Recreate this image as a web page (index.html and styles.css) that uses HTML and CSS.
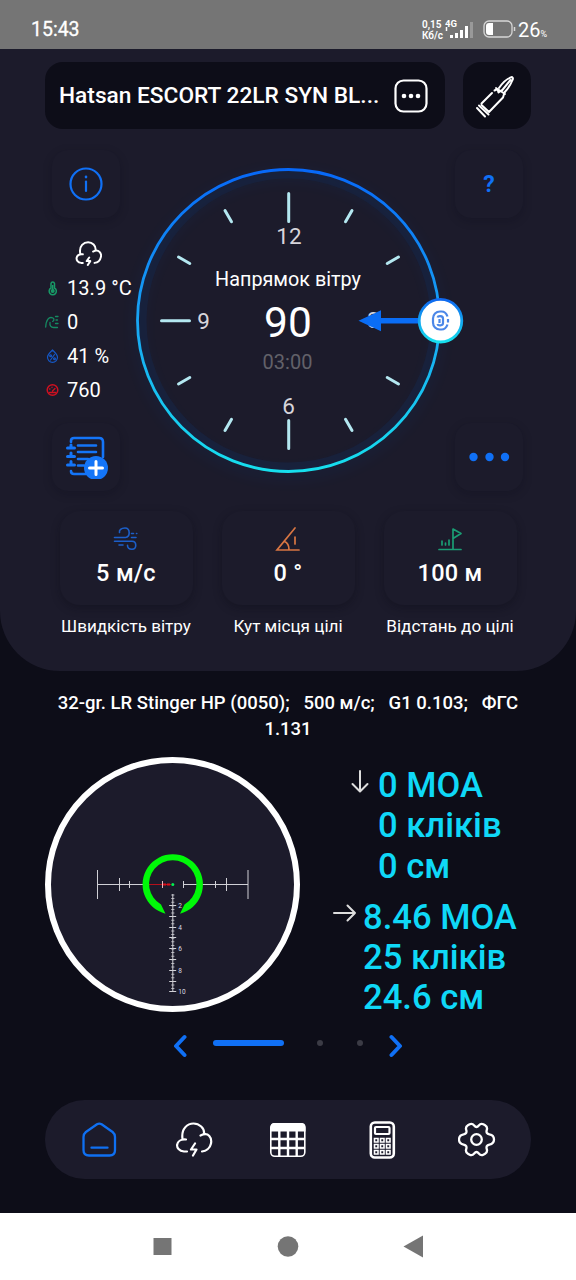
FILE: index.html
```html
<!DOCTYPE html>
<html lang="uk">
<head>
<meta charset="utf-8">
<title>Балістичний калькулятор</title>
<link rel="stylesheet" href="styles.css">
</head>
<body>
<div class="status">
  <span class="clock">15:43</span>
  <div class="status-right">
    <div class="rate"><span>0,15</span><span>Кб/с</span></div>
    <svg class="signal" width="31" height="22" viewBox="0 0 31 22">
      <text class="net" x="0" y="9">4G</text>
      <path d="M6.500 20v-3M11.500 20v-5M16.500 20v-8M21.500 20v-12" stroke="#fff" stroke-width="3"/>
      <path d="M26.500 20v-16" stroke="#999" stroke-width="3"/>
      <path d="M1.500 9v4" stroke="#fff" stroke-width="1.500"/>
    </svg>
    <svg class="battery" width="34" height="18" viewBox="0 0 34 18">
      <rect x="1" y="1" width="28" height="16" rx="5" fill="none" stroke="#d6d6d6" stroke-width="1.300"/>
      <path d="M10 3v12H6a3 3 0 0 1-3-3V6a3 3 0 0 1 3-3z" fill="#fff"/>
      <path d="M31.500 7v4" stroke="#d6d6d6" stroke-width="1.500"/>
    </svg>
    <span class="charge">26<small>%</small></span>
  </div>
</div>

<main class="panel">
  <header class="head">
    <div class="weapon">
      <span class="weapon-name">Hatsan ESCORT 22LR SYN BL...</span>
      <svg width="34" height="34" viewBox="0 0 34 34">
        <rect x="1.500" y="1.500" width="31" height="31" rx="8" fill="none" stroke="#fff" stroke-width="2.200"/>
        <g fill="#fff"><circle cx="10" cy="17" r="2.300"/><circle cx="17" cy="17" r="2.300"/><circle cx="24" cy="17" r="2.300"/></g>
      </svg>
    </div>
    <div class="ammo">
      <svg width="44" height="44" viewBox="0 0 44 44" fill="none" stroke="#fff" stroke-width="2" stroke-linecap="round" stroke-linejoin="round">
        <path d="M2 34l8 8.500M4 31.500l9.500 9"/>
        <path d="M17 19L6.500 29.500M6.500 31l7.500 7L28 23.500l1.500-5M19.500 16.500l3-1.500 1 3.500 3-2M21 14l9 6"/>
        <path d="M24 14C28 8 32 4.500 37 3c1.500 1 1 2 .5 3C35.500 11 33 15 29 19M35.500 6L27 16.500"/>
      </svg>
    </div>
  </header>

  <section class="compass">
    <div class="side">
      <div class="tile">
        <svg width="34" height="34" viewBox="0 0 34 34" fill="none" stroke="#1070f5" stroke-width="2.200" stroke-linecap="round"><circle cx="17" cy="17" r="15.500"/><path d="M17 14.500V24"/><path d="M17 9.800v.3" stroke-width="2.600"/></svg>
      </div>
      <ul class="weather">
        <li class="sky"><svg width="27" height="26" viewBox="0 0 38 36" fill="none" stroke="#fff" stroke-width="2.800" stroke-linecap="round" stroke-linejoin="round"><path d="M11 30.500H8.500C-.5 29.500 0 17 11 18.500M7.500 18C5 6 13 1.500 18.500 1.500S30 6 29 13.500M25.500 14.500C34 10 37.500 18 36.500 22c-1 5-4.500 8-9 8.500M20 23l-3.500 5h5L18 33.500"/></svg></li>
        <li><svg width="14" height="16" viewBox="0 0 14 16" fill="none" stroke="#189a67" stroke-width="1.500"><path d="M6 8V3.500a1.800 1.800 0 0 1 3.500 0V8a3.600 3.600 0 1 1-3.500 0z"/><path d="M7.700 5v6"/><circle cx="7.700" cy="11" r="1.300" fill="#189a67"/></svg><span>13.9 °C</span></li>
        <li><svg width="14" height="14" viewBox="0 0 14 14" fill="none" stroke="#158a62" stroke-width="1.300" stroke-linecap="round"><path d="M.7 12C1 5 4 1 8 3c1.500 1 1 3-.3 3.300M5 7.500c-.5 3 1 5 3.500 5h4M10.500 1.500h2.500M11 5h1.500M10.500 8.500H13"/></svg><span>0</span></li>
        <li><svg width="14" height="14" viewBox="0 0 14 14" fill="none" stroke="#1558c7" stroke-width="1.200" stroke-linecap="round"><path d="M7.500 1C10 3.500 12.500 5.500 12.500 8.300a5 5 0 0 1-10 0C2.500 5.500 5 3.500 7.500 1zM9.500 5.500l-4 5.500"/><circle cx="5.600" cy="6.800" r=".9"/><circle cx="9.500" cy="9.700" r=".9"/></svg><span>41 %</span></li>
        <li><svg width="14" height="14" viewBox="0 0 14 14" fill="none" stroke="#cf1020" stroke-width="1.500" stroke-linecap="round"><circle cx="7.500" cy="7" r="5.300"/><path d="M4.500 9.500h6M7.500 8L10 5.500M4.500 6h.5M7 4.200v.3" stroke-width="1.300"/></svg><span>760</span></li>
      </ul>
      <div class="tile">
        <svg class="note" width="44" height="44" viewBox="0 0 44 44" fill="none" stroke="#1475f8" stroke-width="2.600" stroke-linecap="round" stroke-linejoin="round">
          <path d="M7 7V6q0-3 3-3h25q4 0 4 4v15M7 36q0 3 3 3h12"/>
          <path d="M14 10.500h18M14 17h18M14 24h10M14 30.500h6"/>
          <path d="M3.500 13h7M3.500 21.500h7M3.500 30h7M7 10v3M7 18v3.500M7 26.500V30" stroke-width="3"/>
          <circle cx="32" cy="33" r="12" fill="#1475f8" stroke="none"/><path d="M32 26.500v13M25.500 33h13" stroke="#fff" stroke-width="3"/>
        </svg>
      </div>
    </div>

    <svg class="dial" width="305" height="305" viewBox="136 168 305 305">
      <defs>
        <linearGradient id="ring" x1="0" y1="0" x2="0" y2="1"><stop offset="0" stop-color="#0768f8"/><stop offset=".5" stop-color="#18a5f4"/><stop offset="1" stop-color="#16e0ee"/></linearGradient>
        <linearGradient id="knob" x1="0" y1="0" x2="0" y2="1"><stop offset="0" stop-color="#0f68f0"/><stop offset="1" stop-color="#16e0ee"/></linearGradient>
        <filter id="glow" x="-20%" y="-20%" width="140%" height="140%"><feGaussianBlur stdDeviation="7"/></filter>
        <g id="mark"><path d="M288.500 193.500v13"/></g>
      </defs>
      <circle cx="288.500" cy="325" r="150" fill="none" stroke="#0b4ea8" stroke-width="7" opacity=".14" filter="url(#glow)"/>
      <circle cx="288.500" cy="320.500" r="146" fill="none" stroke="#172341" stroke-width="8" opacity=".7"/>
      <circle cx="288.500" cy="320.500" r="151" fill="none" stroke="url(#ring)" stroke-width="2.800"/>
      <g stroke="#b4e8f1" stroke-width="3" stroke-linecap="round">
        <path d="M288.700 193.500v28M288.700 420.500v28M161.500 320.700h28"/>
        <use href="#mark" transform="rotate(30 288.500 320.500)"/><use href="#mark" transform="rotate(60 288.500 320.500)"/>
        <use href="#mark" transform="rotate(120 288.500 320.500)"/><use href="#mark" transform="rotate(150 288.500 320.500)"/>
        <use href="#mark" transform="rotate(210 288.500 320.500)"/><use href="#mark" transform="rotate(240 288.500 320.500)"/>
        <use href="#mark" transform="rotate(300 288.500 320.500)"/><use href="#mark" transform="rotate(330 288.500 320.500)"/>
      </g>
      <g class="hours"><text x="289" y="243.500">12</text><text x="203.500" y="328.500">9</text><text x="288.500" y="414">6</text><text x="373.500" y="328">3</text></g>
      <text class="dial-title" x="288" y="286">Напрямок вітру</text>
      <text class="dial-value" x="288" y="336.500">90</text>
      <text class="dial-time" x="287.500" y="368.500">03:00</text>
      <path d="M380 320.700h42" stroke="#0a6df5" stroke-width="5.500"/><path d="M358.500 320.700l22.500-10.500v21z" fill="#0a6df5"/>
      <circle cx="440.500" cy="320.700" r="21.300" fill="#fff" stroke="url(#knob)" stroke-width="2.800"/>
      <g fill="none" stroke="#4b87e8" stroke-width="2.200"><path d="M447.500 316.500c-1-3-3-5-6-5h-1.500c-4 0-7 3-7 7v4c0 4 3 7 7 7h1.500c3 0 5-2 6-5"/><path d="M437.500 317.500c.5-2 5.500-2 5.500 1v4.500c0 3-5 3-5.500 1M439.500 319v4M448 319v3.500"/></g>
    </svg>

    <div class="side side-right">
      <div class="tile help">?</div>
      <div class="tile"><svg class="dots" width="42" height="10" viewBox="0 0 42 10" fill="#1070f5"><circle cx="5.500" cy="5" r="4.200"/><circle cx="21.500" cy="5" r="4.200"/><circle cx="37" cy="5" r="4.200"/></svg></div>
    </div>
  </section>

  <section class="params">
    <div class="param">
      <div class="card"><svg width="26" height="26" viewBox="0 0 26 26" fill="none" stroke="#1c5fc9" stroke-width="1.600" stroke-linecap="round"><path d="M1.500 11.500h11c5 0 5-9.500-.5-9.500C8 2 6 4 6.500 6.500M1.500 15.300h17.500c5 0 5 8 0 8-3 0-4.500-1.500-4.500-4M18.500 7.500h2M18.500 11.500h4.500M23.500 7.500h.3M6 19h4"/></svg><b>5 м/с</b></div>
      <span>Швидкість вітру</span>
    </div>
    <div class="param">
      <div class="card"><svg width="26" height="26" viewBox="0 0 26 26" fill="none" stroke="#d87643" stroke-width="1.700" stroke-linecap="round"><path d="M20 2L2 24h22M9.500 15.500c3.500 1.500 4.500 4.500 4.500 8M20 11v7"/></svg><b>0 °</b></div>
      <span>Кут місця цілі</span>
    </div>
    <div class="param">
      <div class="card"><svg width="26" height="26" viewBox="0 0 26 26" fill="none" stroke="#1a9d74" stroke-width="1.700" stroke-linecap="round" stroke-linejoin="round"><path d="M2 23.500h22M16 23V3l8 4.500-8 5M5 15v4M8.500 17v2M12 14v5"/></svg><b>100 м</b></div>
      <span>Відстань до цілі</span>
    </div>
  </section>
</main>

<p class="bullet">32-gr. LR Stinger HP (0050);&nbsp;&nbsp; 500 м/с;&nbsp;&nbsp; G1 0.103;&nbsp;&nbsp; ФГС<br>1.131</p>

<section class="solution">
  <svg class="scope" width="255" height="255" viewBox="45 757 255 255">
    <circle cx="172.500" cy="884.500" r="124.500" fill="#1c1b2b" stroke="#fff" stroke-width="6"/>
    <g fill="none" stroke="#d0d0d6" stroke-width="1">
      <path d="M97.500 884.500h65M183.500 884.500h64.500"/>
      <path d="M97.500 870v29M248 870v29M119.500 878v13M226.500 878v13M129.500 881v7M215.500 881v7M162.500 881v7M183.500 881v7"/>
      <path d="M172.800 894v98"/>
      <path d="M172.800 894.500v97.500" stroke-width="3.200" stroke-dasharray="1 2.600" opacity=".8"/>
      <path d="M169.200 905.500h7M169.200 916.500h7M169.200 927.500h7M169.200 937.500h7M169.200 948.500h7M169.200 959.500h7M169.200 970.500h7M169.200 981.500h7M169.200 991.500h7"/>
    </g>
    <path d="M149 884.500h22" stroke="#b4101c" stroke-width="1"/><path d="M163 884.500h7" stroke="#e00d18" stroke-width="2" stroke-dasharray="3 1"/>
    <path d="M162.500 881v7" stroke="#e8b8bd"/>
    <path d="M165.500 913.700A30.200 30.200 0 1 1 180 913.700L184.500 904.500A23.700 23.700 0 1 0 161 904.500z" fill="#00f808"/>
    <circle cx="172.800" cy="884.500" r="1.500" fill="#00f050"/>
    <g class="scale"><text x="178.300" y="907.800">2</text><text x="178.300" y="929.500">4</text><text x="178.300" y="951">6</text><text x="178.300" y="972.500">8</text><text x="178.300" y="994">10</text></g>
  </svg>
  <div class="results">
    <div class="result drop">
      <svg width="20" height="24" viewBox="0 0 20 24" fill="none" stroke="#ddd" stroke-width="2" stroke-linecap="round" stroke-linejoin="round"><path d="M10 1v20M2.500 14l7.500 7.500 7.500-7.500"/></svg>
      <div>0 MOA<br>0 кліків<br>0 см</div>
    </div>
    <div class="result drift">
      <svg width="24" height="20" viewBox="0 0 24 20" fill="none" stroke="#ddd" stroke-width="2" stroke-linecap="round" stroke-linejoin="round"><path d="M1 10h21M14.500 2.500L22 10l-7.500 7.500"/></svg>
      <div>8.46 MOA<br>25 кліків<br>24.6 см</div>
    </div>
  </div>
</section>

<div class="pager">
  <svg width="14" height="24" viewBox="0 0 14 24" fill="none" stroke="#1070f5" stroke-width="4" stroke-linecap="round" stroke-linejoin="round"><path d="M11.500 3L3 12l8.500 9"/></svg>
  <i class="bar"></i><i class="dot"></i><i class="dot"></i>
  <svg width="14" height="24" viewBox="0 0 14 24" fill="none" stroke="#1070f5" stroke-width="4" stroke-linecap="round" stroke-linejoin="round"><path d="M2.500 3L11 12l-8.500 9"/></svg>
</div>

<nav class="tabs">
  <svg width="38" height="38" viewBox="0 0 38 38" fill="none" stroke="#0f70f2" stroke-width="2.300" stroke-linecap="round" stroke-linejoin="round"><path d="M17 3.300q2.300-1.400 4.600 0l11 7.700q2.400 2 2.400 5v13q0 5.500-5.500 5.500h-20.500q-5.500 0-5.500-5.500V16q0-3 2.400-5zM11.500 26.700h16"/></svg>
  <svg width="38" height="38" viewBox="0 0 38 38" fill="none" stroke="#fff" stroke-width="2.200" stroke-linecap="round" stroke-linejoin="round"><path d="M12 30.500H9C-1 29.500 0 17.500 11 18.500M7.500 18C6 7 13 2.500 18.500 2.500S30 7 29 13.500M25.500 14.500C34 10.500 37 17 36 22.500c-1 5-5 7.700-9 8M20 22.500L16 28.500h5.500L18 34.500"/></svg>
  <svg width="38" height="38" viewBox="0 0 38 38"><rect x="1.800" y="2.800" width="34" height="32.500" rx="4" fill="none" stroke="#fff" stroke-width="1.600"/><path d="M1.500 10.500V6q0-4 4-4h27q4 0 4 4v4.500z" fill="#fff"/><path d="M10.300 9v26M19 9v26M27.700 9v26M2 18h34M2 27h34" stroke="#fff" stroke-width="2.400"/></svg>
  <svg width="38" height="38" viewBox="0 0 38 38" fill="none" stroke="#fff"><rect x="6.800" y="1.500" width="23" height="35" rx="4" stroke-width="2.600"/><rect x="11" y="6" width="14.500" height="7" rx="1" stroke-width="2.200"/><g stroke-width="1.600"><path d="M10.500 17.500H14v3.500h-3.500zM16.500 17.500H20v3.500h-3.500zM22.500 17.500H26v3.500h-3.500zM10.500 23.500H14V27h-3.500zM16.500 23.500H20V27h-3.500zM22.500 23.500H26V27h-3.500zM10.500 29.500H14V33h-3.500zM16.500 29.500H20V33h-3.500zM22.500 29.500H26V33h-3.500z"/></g></svg>
  <svg width="38" height="38" viewBox="0 0 38 38" fill="none" stroke="#fff" stroke-width="2.300" stroke-linejoin="round"><circle cx="18.500" cy="18.500" r="5.300"/><path d="M16.200 4.500c1.600 2 3 2 4.600 0 1.300-1.600 3-2 4.500-1.200l1.800 1c1.800 1 2.300 2.500 1.700 4.500-.8 2.600 0 4 2.600 4.600 3 .6 4.600 1.600 4.600 5.100s-1.600 4.500-4.600 5.100c-2.600.6-3.400 2-2.600 4.600.6 2 .1 3.500-1.700 4.500l-1.800 1c-1.500.8-3.200.4-4.500-1.200-1.600-2-3-2-4.600 0-1.300 1.600-3 2-4.500 1.200l-1.800-1c-1.800-1-2.300-2.500-1.700-4.500.8-2.600 0-4-2.600-4.600C2.600 23 1 22 1 18.500s1.600-4.500 4.600-5.100c2.600-.6 3.400-2 2.600-4.600-.6-2-.1-3.500 1.700-4.500l1.800-1c1.500-.8 3.200-.4 4.500 1.200z"/></svg>
</nav>

<footer class="system">
  <svg width="20" height="26" viewBox="0 0 20 26"><path d="M1.500 4h18v17h-18z" fill="#757575"/></svg>
  <svg width="22" height="26" viewBox="0 0 22 26"><circle cx="11" cy="12.500" r="10.300" fill="#757575"/></svg>
  <svg width="22" height="26" viewBox="0 0 22 26"><path d="M1.500 12.500L21 1.500v22z" fill="#757575"/></svg>
</footer>
</body>
</html>
```
FILE: styles.css
```css
* { box-sizing: border-box; }
body {
  margin: 0;
  width: 576px;
  height: 1280px;
  overflow: hidden;
  display: flex;
  flex-direction: column;
  background: #0d0d18;
  color: #fff;
  font-family: Roboto, "Noto Sans", sans-serif;
}
svg { display: block; flex: none; }

.status {
  height: 49px;
  flex: none;
  padding: 10px 27px 0 31px;
  display: flex;
  align-items: center;
  justify-content: space-between;
  background: #757575;
}
.clock { font-size: 19.500px; font-weight: 400; -webkit-text-stroke: .3px #fff; }
.status-right { display: flex; align-items: center; margin-top: -2px; }
.rate { display: flex; flex-direction: column; width: 23px; font-size: 10px; line-height: 11px; font-weight: 600; white-space: nowrap; margin-top: 2px; }
.net { font-size: 9.500px; font-weight: 700; fill: #fff; }
.battery { margin-left: 7px; }
.charge { font-size: 20px; width: 31px; margin-left: 1px; white-space: nowrap; margin-top: 2px; }
.charge small { font-size: 9px; }

.panel {
  height: 622px;
  flex: none;
  padding-top: 13px;
  background: #1c1b2b;
  border-radius: 0 0 60px 60px;
}
.head { display: flex; gap: 18px; padding: 0 45px; height: 67px; }
.weapon {
  width: 400px;
  padding: 0 17px 0 14px;
  display: flex;
  align-items: center;
  justify-content: space-between;
  border-radius: 18px;
  background: #0d0d18;
}
.weapon-name { font-size: 22.700px; font-weight: 500; white-space: nowrap; }
.ammo { width: 68px; display: grid; place-items: center; border-radius: 18px; background: #0d0d18; }

.compass {
  display: grid;
  grid-template-columns: 91px 305px 1fr;
  margin-top: 21px;
  padding-left: 45px;
  height: 341px;
  align-items: center;
}
.side { height: 341px; display: flex; flex-direction: column; justify-content: space-between; padding-left: 7px; }
.side-right { padding-left: 14px; }
.tile {
  width: 68px;
  height: 68px;
  display: grid;
  place-items: center;
  border-radius: 16px;
  background: #1c1b2b;
  box-shadow: 0 3px 10px rgba(10, 10, 22, .22);
}
.help { color: #1070f5; font-size: 23px; font-weight: 700; }
.weather { list-style: none; margin: 2px -20px 0 -7px; padding: 0; font-size: 20px; letter-spacing: .05px; }
.weather li { height: 34px; display: flex; align-items: center; gap: 8px; white-space: nowrap; }
.weather .sky { padding-left: 30px; }
.dial { overflow: visible; position: relative; }
.dial text { text-anchor: middle; fill: #fff; }
.dial .hours text { font-size: 22.500px; fill: #d7d5db; }
.dial .dial-title { font-size: 19.800px; }
.dial .dial-value { font-size: 42.500px; }
.dial .dial-time { font-size: 20px; fill: #626169; }

.params { display: flex; justify-content: space-between; padding: 0 45px; margin-top: 20px; }
.param { width: 162px; display: flex; flex-direction: column; align-items: center; gap: 10px; font-size: 17.100px; line-height: 22px; white-space: nowrap; }
.card {
  width: 133px;
  height: 94px;
  padding-top: 15px;
  display: flex;
  flex-direction: column;
  align-items: center;
  gap: 7px;
  border-radius: 20px;
  box-shadow: 0 3px 9px rgba(10, 10, 22, .36);
}
.card b { font-size: 23.500px; line-height: 29px; font-weight: 500; letter-spacing: .3px; }

.bullet { margin: 19px 0 0; height: 52px; text-align: center; font-size: 18.500px; line-height: 26px; font-weight: 500; white-space: nowrap; }

.solution { display: flex; margin-top: 15px; padding-left: 45px; height: 255px; }
.scale { font-size: 6.500px; fill: #dedee4; }
.results { padding-top: 8px; display: flex; flex-direction: column; gap: 11px; }
.result { display: flex; font-size: 34.600px; line-height: 40.300px; font-weight: 500; color: #0fd8f7; white-space: nowrap; }
.drop { padding-left: 50px; gap: 8px; }
.drop svg { margin-top: 5px; }
.drift { padding-left: 33px; gap: 6px; }
.drift svg { margin-top: 6px; }

.pager { display: flex; align-items: center; margin-top: 22px; height: 24px; padding-left: 173px; }
.bar { width: 71px; height: 6px; border-radius: 3px; background: #1070f5; margin: 0 33px 6px 26px; }
.dot { width: 6px; height: 6px; border-radius: 50%; background: #3b3b45; margin: 0 34px 6px 0; }
.dot + .dot { margin-right: 26px; }

.tabs {
  display: flex;
  align-items: center;
  justify-content: space-between;
  margin: 42px 45px 34px;
  padding: 0 35px;
  height: 79px;
  flex: none;
  border-radius: 40px;
  background: #1c1b2b;
}
.system { flex: 1; display: flex; align-items: center; padding-left: 152px; gap: 105px; background: #fff; }
.system svg:last-child { margin-left: -2px; }
```
